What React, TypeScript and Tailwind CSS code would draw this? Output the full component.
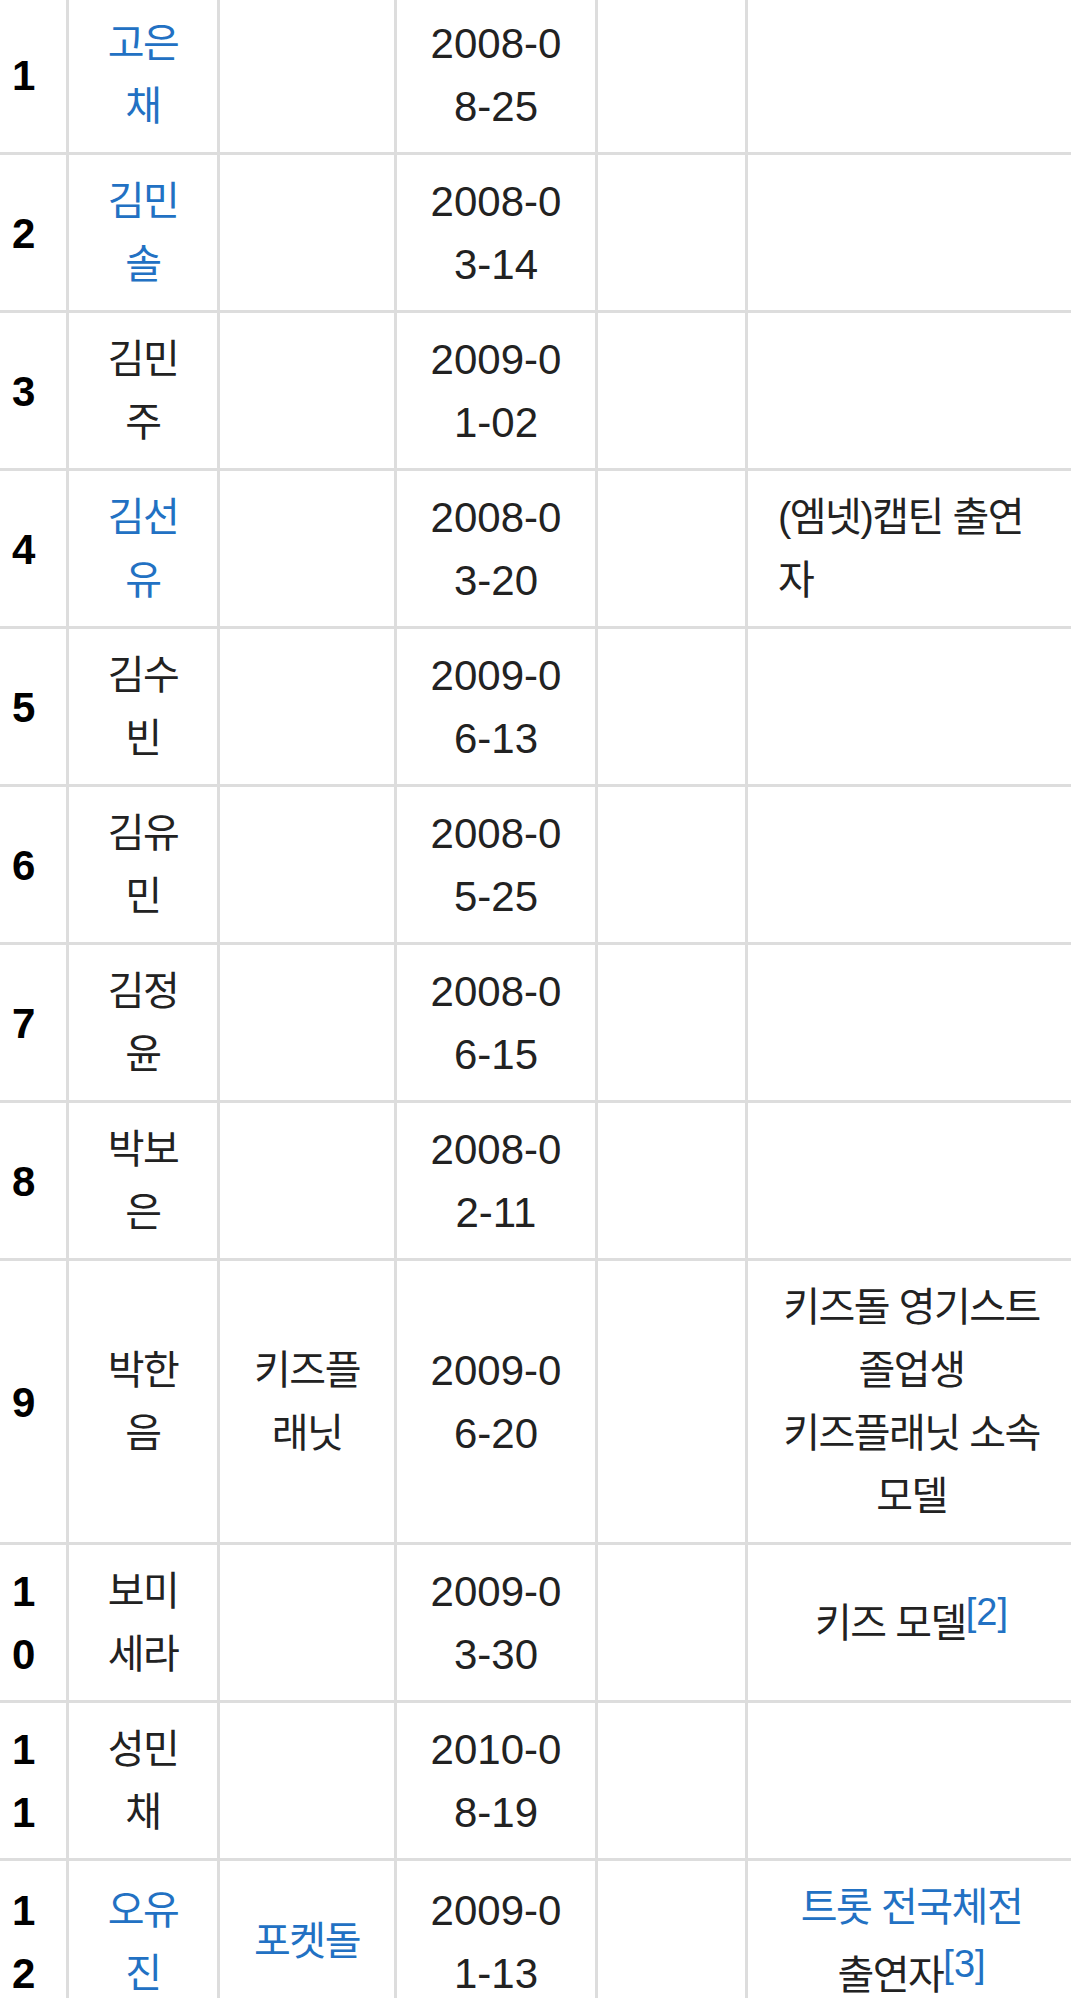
import React from "react";

type Note = { align: "left" | "center"; lines: React.ReactNode[] } | null;

type Row = {
  n: string[];
  name: string[];
  nameLink?: boolean;
  agency?: string[];
  agencyLink?: boolean;
  date: string[];
  note?: Note;
};

const Sup = ({ children }: { children: React.ReactNode }) => (
  <sup className="text-[38px] tracking-normal leading-none align-baseline relative top-[-12px] text-[#2271c3]">
    {children}
  </sup>
);

const rows: Row[] = [
  { n: ["1"], name: ["고은", "채"], nameLink: true, date: ["2008-0", "8-25"] },
  { n: ["2"], name: ["김민", "솔"], nameLink: true, date: ["2008-0", "3-14"] },
  { n: ["3"], name: ["김민", "주"], date: ["2009-0", "1-02"] },
  {
    n: ["4"],
    name: ["김선", "유"],
    nameLink: true,
    date: ["2008-0", "3-20"],
    note: { align: "left", lines: ["(엠넷)캡틴 출연", "자"] },
  },
  { n: ["5"], name: ["김수", "빈"], date: ["2009-0", "6-13"] },
  { n: ["6"], name: ["김유", "민"], date: ["2008-0", "5-25"] },
  { n: ["7"], name: ["김정", "윤"], date: ["2008-0", "6-15"] },
  { n: ["8"], name: ["박보", "은"], date: ["2008-0", "2-11"] },
  {
    n: ["9"],
    name: ["박한", "음"],
    agency: ["키즈플", "래닛"],
    date: ["2009-0", "6-20"],
    note: {
      align: "center",
      lines: ["키즈돌 영기스트", "졸업생", "키즈플래닛 소속", "모델"],
    },
  },
  {
    n: ["1", "0"],
    name: ["보미", "세라"],
    date: ["2009-0", "3-30"],
    note: {
      align: "center",
      lines: [
        <>
          키즈 모델<Sup>[2]</Sup>
        </>,
      ],
    },
  },
  { n: ["1", "1"], name: ["성민", "채"], date: ["2010-0", "8-19"] },
  {
    n: ["1", "2"],
    name: ["오유", "진"],
    nameLink: true,
    agency: ["포켓돌"],
    agencyLink: true,
    date: ["2009-0", "1-13"],
    note: {
      align: "center",
      lines: [
        <span className="text-[#2271c3]">트롯 전국체전</span>,
        <div className="pt-[5px]">
          출연자<Sup>[3]</Sup>
        </div>,
      ],
    },
  },
];

const cellBase =
  "shrink-0 border-r-[3px] border-[#dddddd] pt-[15px] pb-[14px] flex flex-col justify-center leading-[63px] whitespace-nowrap";

function Lines({ lines }: { lines: React.ReactNode[] }) {
  return (
    <>
      {lines.map((l, i) => (
        <div key={i}>{l}</div>
      ))}
    </>
  );
}

function TableRow({ r }: { r: Row }) {
  return (
    <div className="flex border-b-[3px] border-[#dddddd]">
      <div
        className={`${cellBase} w-[69px] pl-[12px] pr-[30px] text-[42px] font-bold text-black`}
      >
        <Lines lines={r.n} />
      </div>
      <div
        className={`${cellBase} w-[151px] px-[30px] text-center text-[40px] tracking-[-1.5px] ${
          r.nameLink ? "text-[#2271c3]" : "text-[#222222]"
        }`}
      >
        <Lines lines={r.name} />
      </div>
      <div
        className={`${cellBase} w-[177px] px-[30px] text-center text-[40px] tracking-[-1.5px] ${
          r.agencyLink ? "text-[#2271c3]" : "text-[#222222]"
        }`}
      >
        <Lines lines={r.agency ?? []} />
      </div>
      <div
        className={`${cellBase} w-[201px] px-[30px] text-center text-[42px] text-[#222222]`}
      >
        <Lines lines={r.date} />
      </div>
      <div className={`${cellBase} w-[150px] px-[30px]`} />
      <div
        className={`${cellBase} w-[330px] px-[30px] text-[40px] tracking-[-1.5px] text-[#222222] ${
          r.note && r.note.align === "left" ? "text-left" : "text-center"
        }`}
      >
        {r.note ? <Lines lines={r.note.lines} /> : null}
      </div>
    </div>
  );
}

export default function App() {
  return (
    <div className="w-[1071px] h-[1998px] overflow-hidden bg-white [font-family:'Liberation_Sans','Noto_Sans_CJK_KR',sans-serif]">
      <div className="mt-[-3px] w-[1078px]">
        {rows.map((r, i) => (
          <TableRow key={i} r={r} />
        ))}
      </div>
    </div>
  );
}
